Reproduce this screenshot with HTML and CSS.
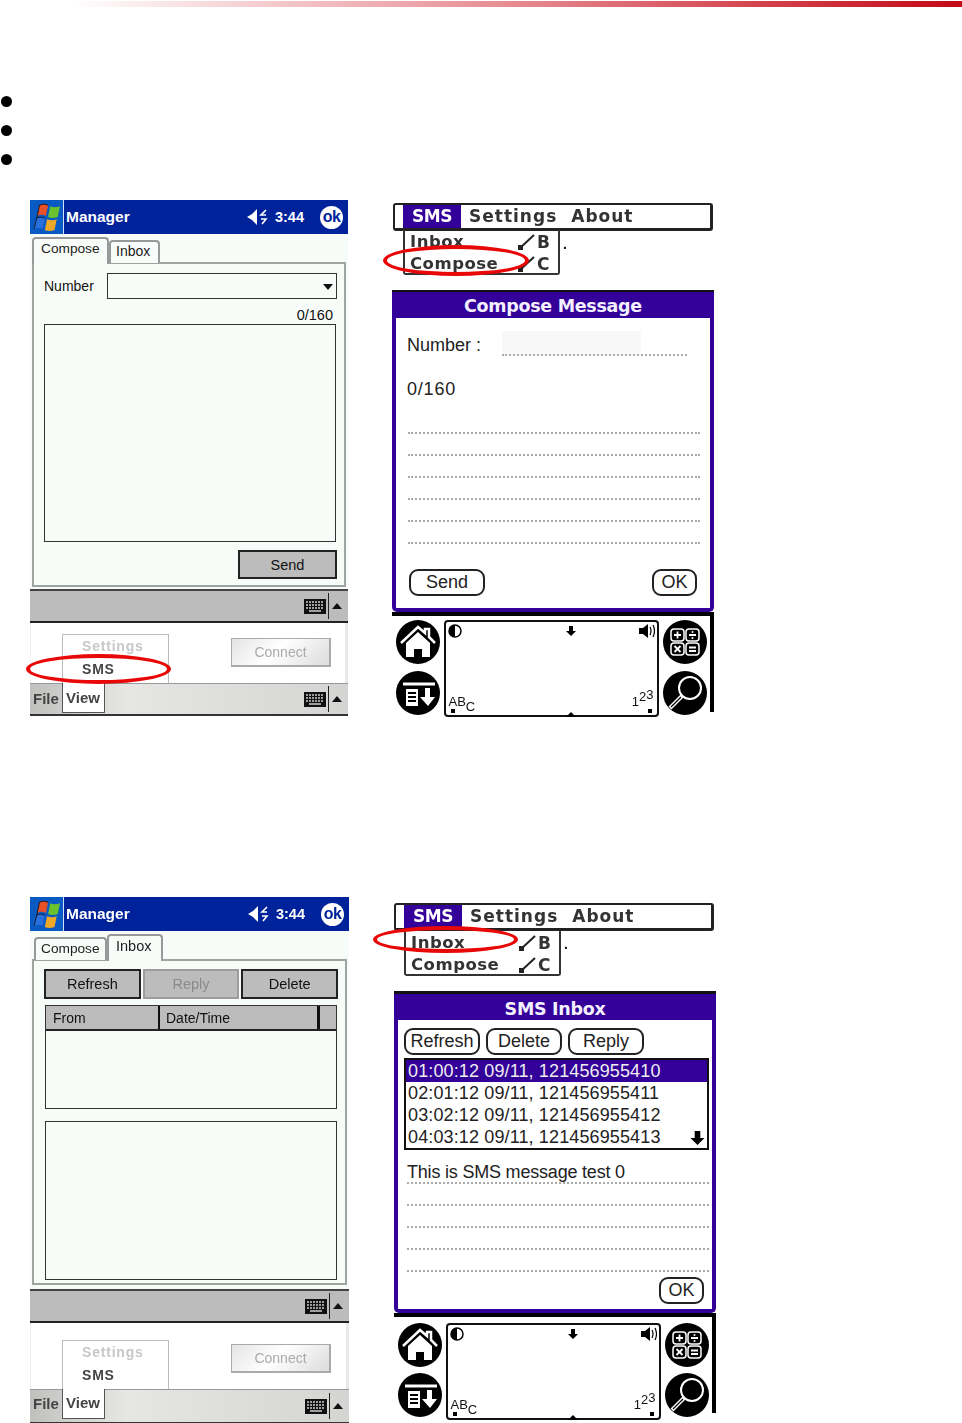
FILE: index.html
```html
<!DOCTYPE html>
<html lang="en">
<head>
<meta charset="utf-8">
<title>SMS Manager</title>
<link rel="stylesheet" href="styles.css">
</head>
<body>
<svg class="defs" width="0" height="0" aria-hidden="true">
  <defs>
    <symbol id="flag" viewBox="1 1 26 26">
      <path d="M7 3q4-2 8 0l-2 10q-4-2-8 0z" fill="#e8502a"/>
      <path d="M17 4q4 2 9 0l-2 10q-5 2-9 0z" fill="#6cc22c"/>
      <path d="M4 15q4-2 8 0l-2 10q-4-2-8 0z" fill="#2a6fe0"/>
      <path d="M14 16q5 2 9 0l-2 10q-5 2-9 0z" fill="#f0a828"/>
      <path d="M7 3q4-2 8 0M4 15q4-2 8 0M2 25l3-12 2-10" fill="none" stroke="#111" stroke-width=".8"/>
    </symbol>
    <symbol id="speaker" viewBox="0 0 21 18">
      <path d="M0 9l5-3 5-5v16l-5-5z" fill="#fff"/>
      <path d="M19 2l-5 5h5M14 11h5l-4 5" fill="none" stroke="#fff" stroke-width="1.6"/>
    </symbol>
    <symbol id="keyboard" viewBox="0 0 22 15">
      <rect width="22" height="15" fill="#111"/>
      <path d="M2 3h18M2 6h18M2 9h18" stroke="#ccc" stroke-width="1.4" stroke-dasharray="2 1"/>
      <path d="M5 12h12" stroke="#ccc" stroke-width="1.5"/>
    </symbol>
    <symbol id="stroke" viewBox="0 0 18 18">
      <path d="M3 15L17 2" stroke="#222" stroke-width="2"/>
      <rect x="1" y="12" width="5" height="5" fill="#222"/>
    </symbol>
    <symbol id="home" viewBox="0 0 44 44">
      <circle cx="22" cy="22" r="22" fill="#000"/>
      <path d="M5 23L22 7l7 6V9h4v8l6 6" fill="none" stroke="#fff" stroke-width="2.5"/>
      <path d="M10 23v14h8v-8h8v8h8V23L22 12z" fill="#fff"/>
      <path d="M18 31h8v7h-8z" fill="#000"/>
    </symbol>
    <symbol id="menu" viewBox="0 0 44 44">
      <circle cx="22" cy="22" r="22" fill="#000"/>
      <path d="M7 13h32" stroke="#fff" stroke-width="3"/>
      <path d="M10 18h12v17H10z" fill="#fff"/>
      <path d="M12 22h8M12 26h8M12 30h8" stroke="#000" stroke-width="2"/>
      <path d="M29 17h5v9h5l-7 9-8-9h5z" fill="#fff"/>
    </symbol>
    <symbol id="calc" viewBox="0 0 44 44">
      <circle cx="22" cy="22" r="22" fill="#000"/>
      <g fill="none" stroke="#fff" stroke-width="1.500"><rect x="8" y="9" width="13" height="12" rx="3"/><rect x="23" y="9" width="13" height="12" rx="3"/><rect x="8" y="23" width="13" height="12" rx="3"/><rect x="23" y="23" width="13" height="12" rx="3"/></g>
      <path d="M11 15h7M14.500 11.500v7M26 15h7M11.500 26l6 6M17.500 26l-6 6M26 27.500h7M26 31h7" stroke="#fff" stroke-width="1.800"/>
      <circle cx="29.500" cy="12" r="1" fill="#fff"/><circle cx="29.500" cy="18" r="1" fill="#fff"/>
    </symbol>
    <symbol id="find" viewBox="0 0 44 44">
      <circle cx="22" cy="22" r="22" fill="#000"/>
      <circle cx="27" cy="17" r="11" fill="none" stroke="#fff" stroke-width="2"/>
      <path d="M19 25L7 37" stroke="#fff" stroke-width="4"/>
      <path d="M18 26L8 36" stroke="#000" stroke-width="1.200"/>
    </symbol>
    <symbol id="contrast" viewBox="0 0 14 14">
      <circle cx="7" cy="7" r="6" fill="#fff" stroke="#000" stroke-width="1.500"/>
      <path d="M7 1a6 6 0 0 0 0 12z" fill="#000"/>
    </symbol>
    <symbol id="down" viewBox="0 0 10 10">
      <path d="M3 0h4v5h3l-5 5-5-5h3z" fill="#000"/>
    </symbol>
    <symbol id="volume" viewBox="0 0 16 14">
      <path d="M0 4h4l5-4v14l-5-4H0z" fill="#000"/>
      <path d="M11 3q2 4 0 8M14 1q3 6 0 12" fill="none" stroke="#000" stroke-width="1.200"/>
    </symbol>
  </defs>
</svg>

<div class="topbar"></div>
<ul class="bullets"><li></li><li></li><li></li></ul>

<section class="row row-one">
  <div class="ppc">
    <div class="titlebar">
      <span class="start"><svg class="flag"><use href="#flag"/></svg></span>
      <span class="app">Manager</span>
      <svg class="speaker"><use href="#speaker"/></svg>
      <span class="clock">3:44</span>
      <span class="ok">ok</span>
    </div>
    <div class="client">
      <div class="tabs">
        <span class="tab tab-active">Compose</span>
        <span class="tab">Inbox</span>
      </div>
      <div class="tabpanel">
        <div class="number-row">
          <span class="label">Number</span>
          <span class="combo"><i class="caret"></i></span>
        </div>
        <div class="counter">0/160</div>
        <div class="textarea"></div>
        <div class="send-row"><span class="btn btn-send">Send</span></div>
      </div>
    </div>
    <div class="sip"><svg class="kbd"><use href="#keyboard"/></svg><i class="sip-sep"></i><i class="sip-up"></i></div>
    <div class="strip">
      <div class="popup"><span class="muted">Settings</span><span>SMS</span></div>
      <span class="connect">Connect</span>
    </div>
    <div class="menubar">
      <span class="menu-file">File</span>
      <span class="menu-view">View</span>
      <svg class="kbd"><use href="#keyboard"/></svg><i class="sip-sep"></i><i class="sip-up"></i>
    </div>
    <i class="ring ring-sms"></i>
  </div>

  <div class="palm">
    <div class="palm-bar"><span class="palm-sel">SMS</span><span class="palm-item">Settings</span><span class="palm-item">About</span></div>
    <div class="palm-drop-row">
      <div class="palm-drop">
        <div class="drop-line"><span>Inbox</span><span class="short"><svg class="stroke"><use href="#stroke"/></svg>B</span></div>
        <div class="drop-line"><span>Compose</span><span class="short"><svg class="stroke"><use href="#stroke"/></svg>C</span></div>
      </div>
      <span class="tick">.</span>
    </div>
    <i class="ring ring-compose"></i>
    <div class="form">
      <div class="form-title">Compose Message</div>
      <div class="form-body">
        <div class="num-line"><span>Number :</span><span class="num-field"></span></div>
        <div class="count-line">0/160</div>
        <div class="dots dots-six"><i></i><i></i><i></i><i></i><i></i><i></i></div>
        <div class="form-btns"><span class="pbtn pbtn-send">Send</span><span class="pbtn pbtn-ok">OK</span></div>
      </div>
    </div>
    <div class="silk">
      <div class="silk-col"><svg class="silk-ico"><use href="#home"/></svg><svg class="silk-ico"><use href="#menu"/></svg></div>
      <div class="graffiti">
        <div class="gr-top"><svg class="g-contrast"><use href="#contrast"/></svg><svg class="g-down"><use href="#down"/></svg><svg class="g-vol"><use href="#volume"/></svg></div>
        <div class="gr-bot"><span class="abc">AB<sub>C</sub></span><span class="n123">1<sup>2</sup><sup class="hi">3</sup></span></div>
        <i class="notch"></i>
      </div>
      <div class="silk-col"><svg class="silk-ico"><use href="#calc"/></svg><svg class="silk-ico"><use href="#find"/></svg></div>
    </div>
  </div>
</section>

<section class="row row-two">
  <div class="ppc">
    <div class="titlebar">
      <span class="start"><svg class="flag"><use href="#flag"/></svg></span>
      <span class="app">Manager</span>
      <svg class="speaker"><use href="#speaker"/></svg>
      <span class="clock">3:44</span>
      <span class="ok">ok</span>
    </div>
    <div class="client">
      <div class="tabs tabs-inbox">
        <span class="tab">Compose</span>
        <span class="tab tab-active">Inbox</span>
      </div>
      <div class="tabpanel tabpanel-inbox">
        <div class="btn-row"><span class="btn">Refresh</span><span class="btn btn-off">Reply</span><span class="btn">Delete</span></div>
        <div class="table">
          <div class="thead"><span class="th th-from">From</span><span class="th th-date">Date/Time</span><span class="th th-end"></span></div>
        </div>
        <div class="textarea textarea-inbox"></div>
      </div>
    </div>
    <div class="sip"><svg class="kbd"><use href="#keyboard"/></svg><i class="sip-sep"></i><i class="sip-up"></i></div>
    <div class="strip">
      <div class="popup"><span class="muted">Settings</span><span>SMS</span></div>
      <span class="connect">Connect</span>
    </div>
    <div class="menubar">
      <span class="menu-file">File</span>
      <span class="menu-view">View</span>
      <svg class="kbd"><use href="#keyboard"/></svg><i class="sip-sep"></i><i class="sip-up"></i>
    </div>
  </div>

  <div class="palm">
    <div class="palm-bar"><span class="palm-sel">SMS</span><span class="palm-item">Settings</span><span class="palm-item">About</span></div>
    <div class="palm-drop-row">
      <div class="palm-drop">
        <div class="drop-line"><span>Inbox</span><span class="short"><svg class="stroke"><use href="#stroke"/></svg>B</span></div>
        <div class="drop-line"><span>Compose</span><span class="short"><svg class="stroke"><use href="#stroke"/></svg>C</span></div>
      </div>
      <span class="tick">.</span>
    </div>
    <i class="ring ring-inbox"></i>
    <div class="form form-inbox">
      <div class="form-title">SMS Inbox</div>
      <div class="form-body">
        <div class="inbox-btns"><span class="pbtn pbtn-a">Refresh</span><span class="pbtn pbtn-a">Delete</span><span class="pbtn pbtn-a">Reply</span></div>
        <div class="listbox">
          <div class="li li-sel">01:00:12 09/11, 121456955410</div>
          <div class="li">02:01:12 09/11, 121456955411</div>
          <div class="li">03:02:12 09/11, 121456955412</div>
          <div class="li">04:03:12 09/11, 121456955413<svg class="li-arrow"><use href="#down"/></svg></div>
        </div>
        <div class="msg">This is SMS message test 0</div>
        <div class="dots dots-five"><i></i><i></i><i></i><i></i><i></i></div>
        <div class="form-btns form-btns-end"><span class="pbtn pbtn-ok">OK</span></div>
      </div>
    </div>
    <div class="silk silk-two">
      <div class="silk-col"><svg class="silk-ico"><use href="#home"/></svg><svg class="silk-ico"><use href="#menu"/></svg></div>
      <div class="graffiti">
        <div class="gr-top"><svg class="g-contrast"><use href="#contrast"/></svg><svg class="g-down"><use href="#down"/></svg><svg class="g-vol"><use href="#volume"/></svg></div>
        <div class="gr-bot"><span class="abc">AB<sub>C</sub></span><span class="n123">1<sup>2</sup><sup class="hi">3</sup></span></div>
        <i class="notch"></i>
      </div>
      <div class="silk-col"><svg class="silk-ico"><use href="#calc"/></svg><svg class="silk-ico"><use href="#find"/></svg></div>
    </div>
  </div>
</section>
</body>
</html>
```

FILE: styles.css
```css
* { box-sizing: border-box; }
html, body { margin: 0; padding: 0; background: #fff; }
body { width: 962px; height: 1423px; overflow: hidden; font-family: "Liberation Sans", Arial, sans-serif; color: #111; }
i { display: block; font-style: normal; }
.defs { position: absolute; }

.topbar { height: 6px; margin-top: 1px; margin-left: 70px; background: linear-gradient(90deg, #fff, #e68a90 50%, #c40816); }
.bullets { list-style: none; margin: 89px 0 0; padding: 0; height: 104px; display: flex; flex-direction: column; gap: 18px; }
.bullets li { width: 11px; height: 11px; margin-left: 1px; border-radius: 50%; background: #000; }

.row { display: flex; align-items: flex-start; margin-left: 30px; }
.row-one { height: 697px; gap: 44px; }
.row-two { gap: 45px; }
.ppc, .palm { position: relative; filter: blur(.35px); }
.ppc { width: 318px; flex: none; }
.row-two .ppc { width: 319px; }

.titlebar { height: 34px; background: #00239c; display: flex; align-items: center; color: #fff; }
.start { width: 34px; height: 34px; background: #0a5ac4; border-right: 1px solid #cfe0ff; display: flex; align-items: center; justify-content: center; }
.flag { width: 28px; height: 28px; }
.app { margin-left: 2px; font-weight: 700; font-size: 15.500px; flex: 1; }
.speaker { width: 21px; height: 18px; }
.clock { margin: 0 16px 0 7px; font: 700 14.500px "Liberation Sans", sans-serif; }
.ok { width: 23px; height: 23px; margin-right: 5px; border-radius: 50%; background: #fff; color: #00239c; font: 700 16px/21px "Liberation Sans", sans-serif; text-align: center; letter-spacing: -.5px; }

.client { height: 355px; background: #f8fcf8; padding: 2px 2px 0; }
.row-two .client { height: 358px; }
.tabs { display: flex; height: 26px; align-items: flex-end; }
.tab { height: 23px; padding: 1px 5px 0; margin-bottom: -1px; border: 2px solid #999; border-bottom: 0; border-radius: 4px 4px 0 0; background: #f8fcf8; font-size: 14px; color: #222; position: relative; z-index: 1; }
.tab-active { height: 27px; width: 77px; padding: 2px 0 0 7px; margin-bottom: -2px; z-index: 2; font-size: 13.700px; }
.tabs .tab:not(.tab-active) { width: 51px; }
.tabs-inbox { padding-left: 2px; }
.tabs-inbox .tab:not(.tab-active) { width: 73px; font-size: 13.700px; padding-top: 2px; }
.tabs-inbox .tab-active { width: 56px; margin-left: 0; font-size: 14.500px; }
.tabpanel { height: 325px; width: 314px; border: 2px solid #a0a4a0; padding: 9px 8px 0 10px; }
.tabpanel-inbox { width: 315px; height: 326px; padding: 8px 8px 0 10px; }

.number-row { display: flex; align-items: center; height: 26px; }
.label { width: 63px; font-size: 14px; }
.combo { flex: 1; height: 26px; border: 1px solid #333; position: relative; margin-right: -1px; }
.caret { position: absolute; right: 3px; top: 10px; border: 5px solid transparent; border-top: 6px solid #111; border-bottom: 0; }
.counter { text-align: right; font-size: 14.500px; height: 25px; padding: 8px 3px 0 0; line-height: 16px; }
.textarea { height: 218px; border: 1px solid #333; width: 292px; background: #f8fcf8; }
.send-row { display: flex; justify-content: flex-end; margin-top: 8px; margin-right: -1px; }
.btn { height: 30px; background: #bcbcbc; border: 2px solid #222; font-size: 14.500px; display: flex; align-items: center; justify-content: center; width: 97px; }
.btn-send { width: 99px; height: 29px; }
.btn-off { background: #bcbcbc; border-color: #9c9c9c; color: #8a8a8a; }
.btn-row { display: flex; gap: 2px; width: 294px; justify-content: space-between; }

.table { margin: 6px 0 12px 1px; height: 104px; width: 292px; border: 1px solid #333; background: #f8fcf8; }
.thead { display: flex; height: 25px; border-bottom: 2px solid #222; background: #bcbcbc; font-size: 14px; }
.th { display: flex; align-items: center; padding-left: 7px; }
.th-from { width: 114px; border-right: 2px solid #111; }
.th-date { flex: 1; padding-left: 6px; border-right: 3px solid #111; }
.th-end { width: 16px; }
.textarea-inbox { height: 159px; margin-left: 1px; }

.sip, .menubar { height: 34px; display: flex; align-items: center; justify-content: flex-end; }
.sip { background: #bcbcbc; border-top: 2px solid #444; border-bottom: 2px solid #222; padding-right: 6px; }
.kbd { width: 22px; height: 15px; }
.sip-sep { width: 1px; height: 26px; background: #222; margin: 0 3px 0 2px; }
.sip-up { border: 5px solid transparent; border-bottom: 6px solid #111; border-top: 0; }

.strip { height: 60px; display: flex; align-items: flex-start; background: #fff; border-right: 3px solid #e8e8e8; border-left: 1px solid #f0f0f0; }
.row-two .strip { height: 66px; }
.popup { width: 107px; height: 50px; margin: 11px 0 0 31px; border: 1px solid #bbb; border-bottom: 0; font: 700 14px "Liberation Sans", sans-serif; display: flex; flex-direction: column; padding: 3px 0 0 19px; gap: 7px; color: #444; letter-spacing: .8px; }
.muted { color: #c8c8c8; }
.row-two .popup { margin-top: 17px; height: 49px; padding-top: 3px; }
.connect { width: 100px; height: 29px; margin: 15px 0 0 62px; border: 1px solid #aaa; border-width: 1px 2px 2px 1px; background: linear-gradient(135deg, #e4e4e4, #fff 45%, #dcdcdc); color: #aaa; font-size: 14px; display: flex; align-items: center; justify-content: center; }
.row-two .connect { margin-top: 21px; }
.menubar { height: 33px; background: linear-gradient(90deg, #c0c0be, #e6e6e4 30%, #d4d4d2); border-top: 1px solid #999; border-bottom: 2px solid #333; padding-right: 6px; position: relative; }
.row-two .menubar { height: 35px; }
.menu-file { position: absolute; left: 3px; top: 6px; font-weight: 700; font-size: 15px; color: #444; }
.row-two .menu-file { top: 5px; }
.menu-view { position: absolute; left: 32px; top: -1px; width: 43px; height: 30px; background: #fff; border: 1px solid #555; border-top: 0; padding: 6px 0 0 3px; font-weight: 700; font-size: 15px; color: #444; }
.row-two .menu-view { padding-top: 5px; }

.ring { position: absolute; border: 4px solid #e80808; border-radius: 50%; z-index: 5; }
.ring-sms { left: -4px; top: 454px; width: 145px; height: 30px; }
.ring-compose { left: -9px; top: 45px; width: 146px; height: 31px; }
.ring-inbox { left: -21px; top: 29px; width: 145px; height: 27px; }

.palm { width: 322px; padding-top: 3px; }
.row-two .palm { padding-top: 6px; }
.palm-bar { height: 28px; width: 320px; margin-left: 1px; border: 2px solid #222; border-right-width: 3px; border-bottom-width: 3px; border-radius: 3px; display: flex; align-items: stretch; padding-left: 8px; font: 700 17px/23px "DejaVu Sans", sans-serif; color: #333; background: #fff; }
.row-two .palm-bar { margin-left: 0; }
.palm-sel { width: 58px; background: #330099; color: #fff; text-align: center; letter-spacing: -.4px; }
.palm-item { margin: 0 6px 0 8px; letter-spacing: 1px; }
.palm-drop-row { display: flex; margin-left: 11px; height: 44px; }
.row-two .palm-drop-row { margin-left: 10px; }
.palm-drop { width: 157px; height: 45px; border: 2px solid #333; border-top: 0; border-radius: 0 0 3px 3px; padding: 1px 5px 0; font: 700 16.500px/22px "DejaVu Sans", sans-serif; color: #333; letter-spacing: .5px; margin-top: -1px; }
.row-two .palm-drop { padding-top: 2px; height: 46px; }
.drop-line { display: flex; justify-content: space-between; height: 22px; }
.short { display: flex; align-items: center; font-size: 17px; letter-spacing: 0; gap: 2px; width: 36px; }
.stroke { width: 18px; height: 18px; }
.tick { font: 700 14px/16px "Liberation Sans", sans-serif; margin: 5px 0 0 3px; }

.form { margin-top: 15px; width: 322px; height: 322px; background: #fff; border: 4px solid #330099; border-top: 0; border-radius: 0 0 5px 5px; position: relative; }
.form-title { height: 28px; margin: 0 -4px; background: #330099; border-top: 2px solid #111; color: #f4f0ff; text-align: center; font: 700 17.500px/28px "DejaVu Sans", sans-serif; letter-spacing: -.3px; }
.form-body { height: 290px; font-size: 18px; font-family: "Liberation Sans", sans-serif; padding: 12px 10px 0 11px; display: flex; flex-direction: column; color: #222; }
.num-line { display: flex; align-items: flex-end; height: 26px; }
.num-field { margin-left: 21px; width: 185px; height: 25px; border-bottom: 2px dotted #aaa; background: linear-gradient(90deg, #f8f8f8 75%, #fff 75%); }
.count-line { margin-top: 23px; letter-spacing: .8px; }
.dots { display: flex; flex-direction: column; gap: 20px; margin: 32px 0 0 1px; }
.dots i { height: 2px; border-top: 2px dotted #aaa; }
.form-btns { display: flex; justify-content: space-between; margin: auto 3px 12px 2px; }
.form-btns-end { justify-content: flex-end; margin: auto 5px 6px 0; }
.pbtn { height: 27px; border: 2px solid #222; border-radius: 9px; display: flex; align-items: center; justify-content: center; font-size: 18px; }
.pbtn-send { width: 76px; }
.pbtn-ok { width: 45px; }
.form-inbox { margin-top: 16px; }
.form-inbox .form-title { height: 29px; line-height: 31px; border-top-width: 3px; }
.form-inbox .form-body { padding: 8px 3px 0 6px; }
.inbox-btns { display: flex; gap: 6px; }
.pbtn-a { width: 76px; }
.listbox { margin-top: 3px; height: 92px; border: 2px solid #111; }
.li { height: 22px; line-height: 22px; padding-left: 2px; position: relative; white-space: nowrap; letter-spacing: .13px; }
.li-sel { background: #330099; color: #eee; }
.li-arrow { position: absolute; right: 2px; top: 5px; width: 15px; height: 14px; }
.msg { margin-top: 13px; padding-left: 3px; line-height: 19px; height: 19px; letter-spacing: -.2px; }
.dots-five { margin: 0 0 0 3px; gap: 20px; }

.silk { display: flex; width: 322px; height: 100px; padding-top: 4px; border-right: 4px solid #000; border-top: 4px solid #000; align-items: flex-start; }
.silk-two { padding-top: 6px; }
.silk-col { display: flex; flex-direction: column; gap: 7px; padding-left: 4px; width: 52px; }
.silk-two .silk-col { gap: 6px; }
.silk-ico { width: 44px; height: 44px; }
.graffiti { width: 215px; height: 97px; flex: none; border: 2px solid #111; border-radius: 4px; position: relative; display: flex; flex-direction: column; justify-content: space-between; padding: 2px; font: 13px/14px "Liberation Sans", sans-serif; }
.gr-top { display: flex; align-items: flex-start; }
.g-contrast { width: 14px; height: 14px; }
.g-down { width: 10px; height: 10px; margin: 2px 0 0 104px; }
.g-vol { width: 16px; height: 14px; margin-left: auto; }
.gr-bot { display: flex; justify-content: space-between; align-items: flex-end; position: relative; padding: 0 1px 4px; }
.gr-bot::before, .gr-bot::after { content: ""; position: absolute; bottom: 0; width: 4px; height: 4px; background: #000; }
.gr-bot::before { left: 3px; }
.gr-bot::after { right: 3px; }
.abc sub { font-size: 13px; vertical-align: -5px; line-height: 0; }
.n123 sup { font-size: 13px; vertical-align: 5px; line-height: 0; }
.n123 sup.hi { vertical-align: 7px; }
.notch { position: absolute; left: 120px; bottom: -2px; border: 5px solid transparent; border-bottom: 5px solid #000; border-top: 0; }
```
